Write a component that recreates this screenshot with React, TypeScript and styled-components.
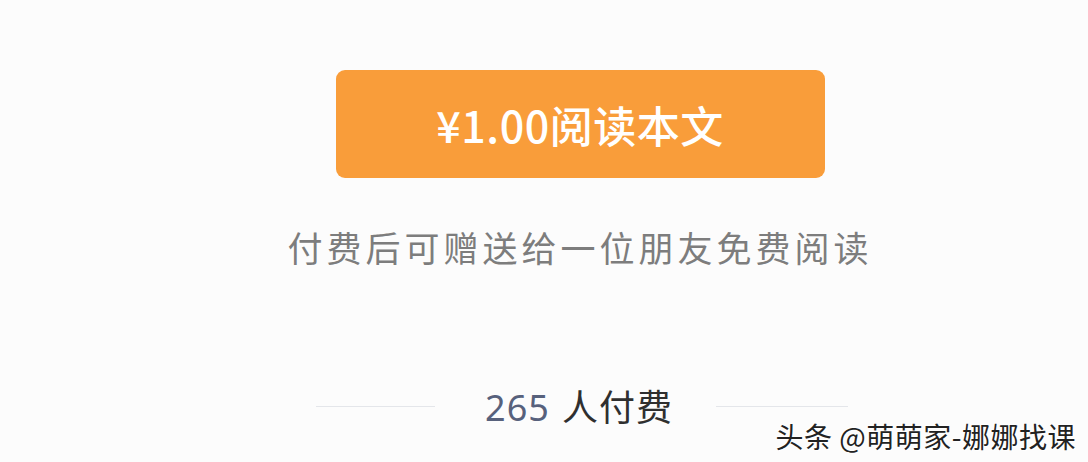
import React from 'react'
import styled, { createGlobalStyle } from 'styled-components'

const GlobalStyle = createGlobalStyle`
  html, body {
    margin: 0;
    padding: 0;
    background: #fcfcfc;
    font-family: "Noto Sans CJK SC", "Noto Sans", sans-serif;
  }
`

const Page = styled.div`
  position: relative;
  width: 1088px;
  height: 462px;
  box-sizing: border-box;
  padding: 70px 0 0 72px;
  display: flex;
  flex-direction: column;
  align-items: center;
  overflow: hidden;
`

const PayButton = styled.button`
  width: 489px;
  height: 108px;
  border: none;
  border-radius: 9px;
  background: #f99d3a;
  color: #fff;
  font-family: "Noto Sans CJK SC", sans-serif;
  font-size: 43px;
  font-weight: 500;
  display: flex;
  align-items: center;
  justify-content: center;
  padding: 0;
  letter-spacing: 0.5px;
`

const Hint = styled.p`
  margin: 46px 0 0;
  font-size: 35px;
  line-height: 46px;
  letter-spacing: 4px;
  color: #7d7d7d;
  font-weight: 400;
`

const CountRow = styled.div`
  margin: 112px 0 0 4px;
  display: flex;
  align-items: center;
`

const Rule = styled.div<{ $w: number }>`
  width: ${(p) => p.$w}px;
  height: 1px;
  background: #e4e6ea;
`

const Count = styled.div`
  margin: 0 43px 0 50px;
  font-size: 36px;
  line-height: 46px;
  color: #2f2f2f;
  letter-spacing: 1px;
`

const Num = styled.span`
  color: #57617c;
  font-family: "Noto Sans", sans-serif;
  margin-right: 12px;
`

const Watermark = styled.div`
  position: absolute;
  right: 12px;
  bottom: 8px;
  font-size: 28px;
  line-height: 36px;
  color: #222;
  text-shadow: 1px 1px 0 #fff, -1px -1px 0 #fff;
  letter-spacing: 0.5px;
`

export default function App() {
  return (
    <>
      <GlobalStyle />
      <Page>
        <PayButton>¥1.00阅读本文</PayButton>
        <Hint>付费后可赠送给一位朋友免费阅读</Hint>
        <CountRow>
          <Rule $w={119} />
          <Count>
            <Num>265</Num>人付费
          </Count>
          <Rule $w={132} />
        </CountRow>
        <Watermark>头条 @萌萌家-娜娜找课</Watermark>
      </Page>
    </>
  )
}
